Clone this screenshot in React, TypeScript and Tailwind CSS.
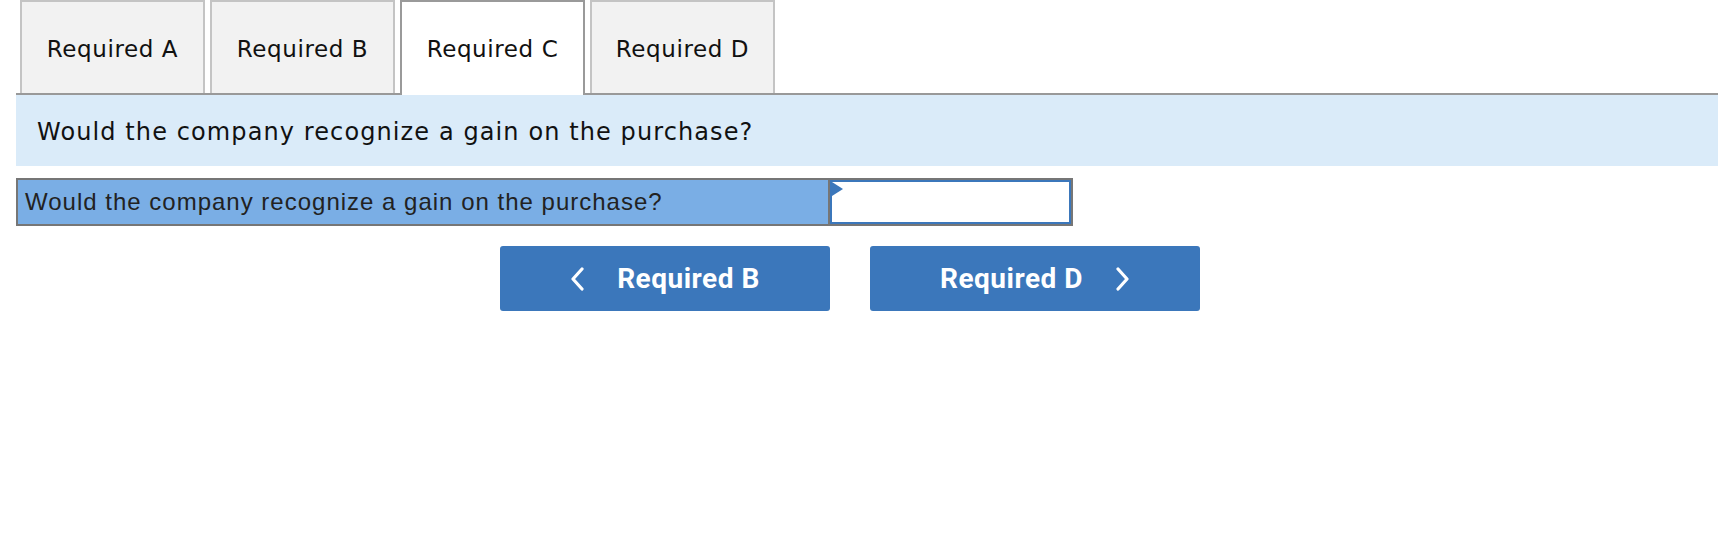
import React from 'react'

const tabs = ['Required A', 'Required B', 'Required C', 'Required D']

const App = () => {
  const active = 'Required C'

  return (
    <div className="w-[1732px] h-[548px] bg-white">
      <div className="flex gap-[5px] pl-[20px] pr-[14px]">
        {tabs.map((t) => (
          <div
            key={t}
            className={
              t === active
                ? 'w-[185px] h-[95px] pt-[4px] pb-[2px] flex items-center justify-center border-2 border-b-0 border-[#9a9a9a] bg-white text-[23px] tracking-[0.6px] text-[#111] font-["DejaVu_Sans",sans-serif]'
                : 'w-[185px] h-[93px] pt-[4px] flex items-center justify-center border-2 border-b-0 border-[#c4c4c4] bg-[#f2f2f2] text-[23px] tracking-[0.6px] text-[#111] font-["DejaVu_Sans",sans-serif]'
            }
          >
            {t}
          </div>
        ))}
      </div>
      <div className="mx-[16px] w-[1702px] border-t-2 border-[#999] -mt-[2px]"></div>
      <div className="mx-[16px] w-[1702px] h-[71px] bg-[#daebf9] flex items-center pl-[21px] pt-[3px] text-[24px] tracking-[1.1px] text-[#111] font-['DejaVu_Sans',sans-serif]">
        Would the company recognize a gain on the purchase?
      </div>

      <div className="ml-[16px] mt-[12px] w-[1057px] h-[48px] flex border-2 border-[#767676]">
        <div className="w-[812px] h-full bg-[#7aaee5] border-r-2 border-[#767676] flex items-center pl-[7px] text-[24px] tracking-[1px] text-[#222] font-['Liberation_Sans',Arial,sans-serif]">
          Would the company recognize a gain on the purchase?
        </div>
        <div className="relative flex-1 h-full border-2 border-[#3b77bb] bg-white">
          <svg className="absolute left-0 top-0" width="12" height="14" viewBox="0 0 12 14">
            <polygon points="0,0 11,7 0,14" fill="#3b77bb" />
          </svg>
        </div>
      </div>

      <div className="ml-[500px] mt-[20px] flex gap-[40px]">
        <button className="w-[330px] h-[65px] rounded-[3px] bg-[#3b77bb] flex items-center justify-center gap-[33px] text-white text-[28px] font-bold font-['Roboto',sans-serif] tracking-[0.5px]">
          <svg width="14" height="24" viewBox="0 0 14 24" fill="none">
            <path d="M12 2 L3 12 L12 22" stroke="white" strokeWidth="3.2" strokeLinecap="round" strokeLinejoin="round" />
          </svg>
          <span>Required B</span>
        </button>
        <button className="w-[330px] h-[65px] rounded-[3px] bg-[#3b77bb] flex items-center justify-center gap-[33px] text-white text-[28px] font-bold font-['Roboto',sans-serif] tracking-[0.5px]">
          <span>Required D</span>
          <svg width="14" height="24" viewBox="0 0 14 24" fill="none">
            <path d="M2 2 L11 12 L2 22" stroke="white" strokeWidth="3.2" strokeLinecap="round" strokeLinejoin="round" />
          </svg>
        </button>
      </div>
    </div>
  )
}

export default App
